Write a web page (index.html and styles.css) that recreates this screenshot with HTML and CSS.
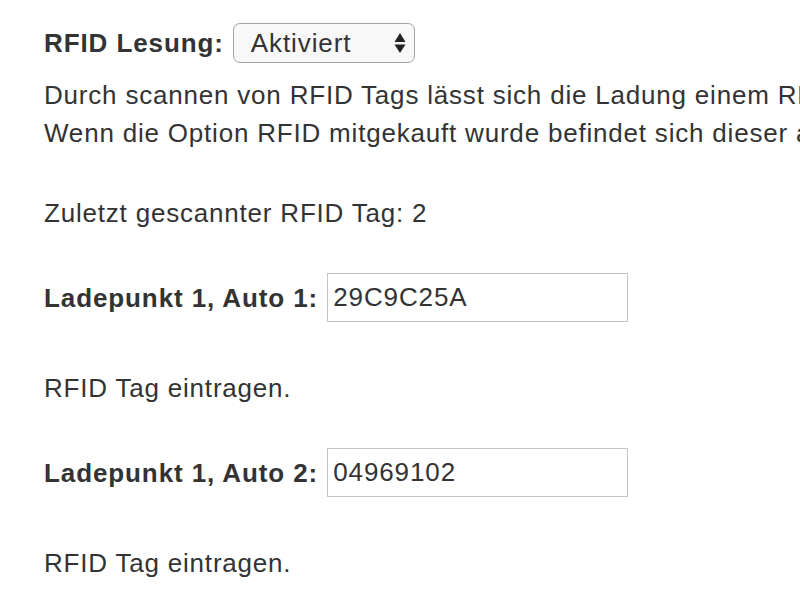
FILE: index.html
```html
<!DOCTYPE html>
<html lang="de">
<head>
    <meta charset="UTF-8">
    <meta name="viewport" content="width=device-width, initial-scale=1.0">
    <title>RFID Einstellungen</title>
    <link rel="stylesheet" href="styles.css">
</head>
<body>

    <div class="settings">
        <div class="field-row">
            <label class="field-label" for="rfidakt">RFID Lesung:</label>
            <span class="select-wrap">
                <select id="rfidakt" class="select">
                    <option value="0">Aus</option>
                    <option value="1" selected>Aktiviert</option>
                </select>
                <svg class="select-arrows" width="12" height="24" viewBox="0 0 12 24">
                    <path d="M6 2 L11.5 11 L0.5 11 Z" fill="#222"/>
                    <path d="M6 22 L11.5 13.5 L0.5 13.5 Z" fill="#222"/>
                </svg>
            </span>
        </div>

        <!-- description, runs past the right edge -->
        <div class="description">
            Durch scannen von RFID Tags lässt sich die Ladung einem RFID Tag zuweisen.<br>
            Wenn die Option RFID mitgekauft wurde befindet sich dieser am Ladepunkt.
        </div>

        <div class="last-tag">Zuletzt gescannter RFID Tag: 2</div>

        <div class="field-row tag-row">
            <label class="field-label" for="rfidlp1c1">Ladepunkt 1, Auto 1:</label>
            <input type="text" id="rfidlp1c1" class="tag-input" value="29C9C25A">
        </div>
        <div class="hint">RFID Tag eintragen.</div>

        <div class="field-row tag-row">
            <label class="field-label" for="rfidlp1c2">Ladepunkt 1, Auto 2:</label>
            <input type="text" id="rfidlp1c2" class="tag-input" value="04969102">
        </div>
        <div class="hint">RFID Tag eintragen.</div>
    </div>

</body>
</html>
```

FILE: styles.css
```css
body {
    margin: 0;
    font-family: "Liberation Sans", Arial, sans-serif;
    font-size: 26px;
    line-height: 38px;
    letter-spacing: 0.8px;
    color: #333;
    background: #fff;
    overflow: hidden;
}

.settings {
    padding: 23px 0 0 44px;
    white-space: nowrap;
}

.field-row {
    display: flex;
    align-items: center;
    gap: 9px;
}

.field-label {
    font-weight: bold;
    letter-spacing: 0.9px;
}

.select-wrap {
    position: relative;
    display: inline-block;
}

.select {
    appearance: none;
    -webkit-appearance: none;
    width: 182px;
    height: 40px;
    padding: 0 0 0 17px;
    font-family: inherit;
    font-size: 26px;
    letter-spacing: 0.9px;
    color: #333;
    background: #f8f8f8;
    border: 1px solid #a3a3a3;
    border-radius: 7px;
    display: block;
}

.select-arrows {
    position: absolute;
    right: 9px;
    top: 8px;
    pointer-events: none;
}

.description {
    margin-top: 13px;
}

.last-tag {
    margin-top: 42px;
}

.tag-row {
    margin-top: 41px;
}

.tag-input {
    width: 301px;
    height: 49px;
    box-sizing: border-box;
    padding: 0 5px;
    font-family: inherit;
    font-size: 26px;
    letter-spacing: 0.9px;
    color: #333;
    border: 1px solid #c4c4c4;
    border-radius: 0;
    background: #fff;
}

.hint {
    margin-top: 47px;
}
```
